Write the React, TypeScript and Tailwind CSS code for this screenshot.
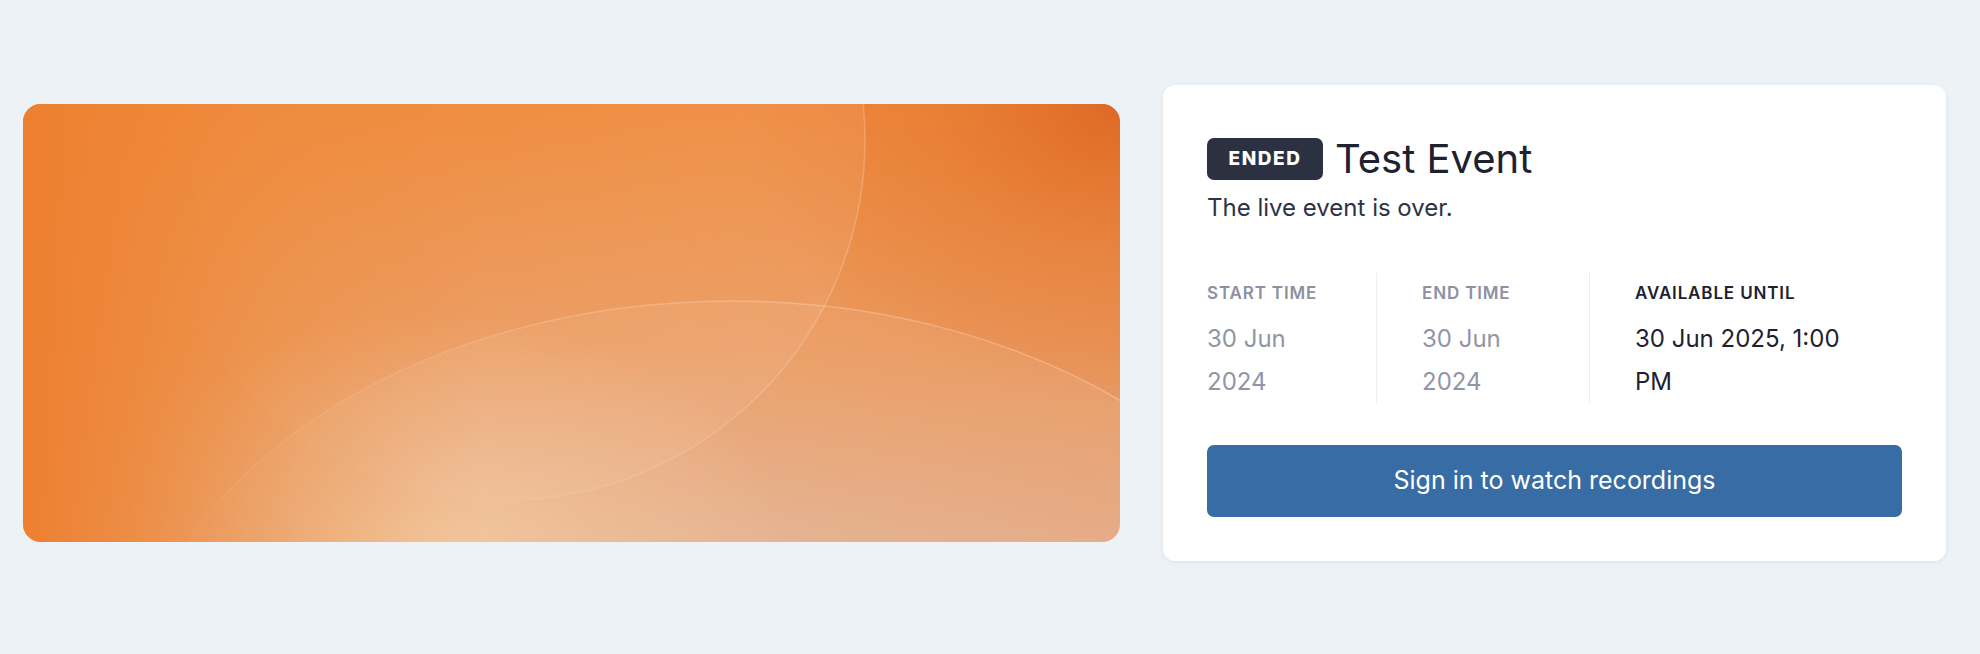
import React from "react";

function Banner() {
  return (
    <div className="relative h-[438px] flex-1 overflow-hidden rounded-[18px]">
      <svg
        className="absolute inset-0 h-full w-full"
        viewBox="0 0 1097 438"
        preserveAspectRatio="none"
      >
        <defs>
          <linearGradient id="base" x1="0" y1="0" x2="0" y2="1">
            <stop offset="0" stopColor="#ef8a3c" />
            <stop offset="0.55" stopColor="#eb9b60" />
            <stop offset="1" stopColor="#e4b190" />
          </linearGradient>
          <linearGradient id="leftFade" x1="0" y1="0" x2="1" y2="0">
            <stop offset="0" stopColor="#ed7f30" stopOpacity="1" />
            <stop offset="0.1" stopColor="#ee8434" stopOpacity="0.8" />
            <stop offset="0.25" stopColor="#ee8a3a" stopOpacity="0.35" />
            <stop offset="0.42" stopColor="#ee8a3a" stopOpacity="0" />
          </linearGradient>
          <radialGradient
            id="glow"
            gradientUnits="userSpaceOnUse"
            cx="0"
            cy="0"
            r="1"
            gradientTransform="translate(410 460) scale(360 250)"
          >
            <stop offset="0" stopColor="#f4c89c" stopOpacity="0.95" />
            <stop offset="0.5" stopColor="#f2c093" stopOpacity="0.45" />
            <stop offset="1" stopColor="#f2c093" stopOpacity="0" />
          </radialGradient>
          <radialGradient
            id="corner"
            gradientUnits="userSpaceOnUse"
            cx="0"
            cy="0"
            r="1"
            gradientTransform="translate(1097 0) scale(380 300)"
          >
            <stop offset="0" stopColor="#dc6324" stopOpacity="0.85" />
            <stop offset="0.5" stopColor="#e27028" stopOpacity="0.35" />
            <stop offset="1" stopColor="#e27028" stopOpacity="0" />
          </radialGradient>
          <linearGradient id="rightShade" x1="0" y1="0" x2="1" y2="0">
            <stop offset="0.6" stopColor="#e07a3a" stopOpacity="0" />
            <stop offset="1" stopColor="#e07a3a" stopOpacity="0.2" />
          </linearGradient>
          <linearGradient
            id="stroke1"
            gradientUnits="userSpaceOnUse"
            x1="122"
            y1="0"
            x2="842"
            y2="0"
          >
            <stop offset="0" stopColor="#ffffff" stopOpacity="0" />
            <stop offset="0.45" stopColor="#ffffff" stopOpacity="0.04" />
            <stop offset="0.8" stopColor="#ffffff" stopOpacity="0.14" />
            <stop offset="1" stopColor="#ffffff" stopOpacity="0.2" />
          </linearGradient>
          <linearGradient
            id="fill1"
            gradientUnits="userSpaceOnUse"
            x1="122"
            y1="0"
            x2="842"
            y2="0"
          >
            <stop offset="0" stopColor="#ffffff" stopOpacity="0" />
            <stop offset="0.5" stopColor="#ffffff" stopOpacity="0.03" />
            <stop offset="1" stopColor="#ffffff" stopOpacity="0.07" />
          </linearGradient>
          <linearGradient
            id="stroke2"
            gradientUnits="userSpaceOnUse"
            x1="103"
            y1="0"
            x2="1097"
            y2="0"
          >
            <stop offset="0" stopColor="#ffffff" stopOpacity="0" />
            <stop offset="0.2" stopColor="#ffffff" stopOpacity="0.1" />
            <stop offset="0.5" stopColor="#ffffff" stopOpacity="0.2" />
            <stop offset="1" stopColor="#ffffff" stopOpacity="0.26" />
          </linearGradient>
          <linearGradient
            id="fill2"
            gradientUnits="userSpaceOnUse"
            x1="103"
            y1="0"
            x2="1097"
            y2="0"
          >
            <stop offset="0" stopColor="#ffffff" stopOpacity="0" />
            <stop offset="0.3" stopColor="#ffffff" stopOpacity="0.05" />
            <stop offset="1" stopColor="#ffffff" stopOpacity="0.07" />
          </linearGradient>
        </defs>
        <rect x="0" y="0" width="1097" height="438" fill="url(#base)" />
        <rect x="0" y="0" width="1097" height="438" fill="url(#rightShade)" />
        <rect x="0" y="0" width="1097" height="438" fill="url(#glow)" />
        <rect x="0" y="0" width="1097" height="438" fill="url(#leftFade)" />
        <rect x="0" y="0" width="1097" height="438" fill="url(#corner)" />
        <circle
          cx="482"
          cy="36"
          r="360"
          fill="url(#fill1)"
          stroke="url(#stroke1)"
          strokeWidth="1.5"
        />
        <ellipse
          cx="709"
          cy="626"
          rx="606"
          ry="429"
          fill="url(#fill2)"
          stroke="url(#stroke2)"
          strokeWidth="1.5"
        />
      </svg>
    </div>
  );
}

function InfoColumn({
  label,
  value,
  dark,
  className,
}: {
  label: string;
  value: string;
  dark?: boolean;
  className: string;
}) {
  return (
    <div className={className}>
      <div
        className={
          dark
            ? "text-[17px] leading-[24px] font-semibold uppercase tracking-[0.05em] text-[#1e2230]"
            : "text-[17px] leading-[24px] font-semibold uppercase tracking-[0.05em] text-[#8c90a0]"
        }
      >
        {label}
      </div>
      <div
        className={
          dark
            ? "mt-[12px] text-[24px] leading-[43px] text-[#1e2230]"
            : "mt-[12px] text-[24px] leading-[43px] text-[#9195a5]"
        }
      >
        {value}
      </div>
    </div>
  );
}

export default function App() {
  return (
    <div className="min-h-screen bg-[#edf2f7] pl-[23px] pr-[34px] pt-[85px] font-['Inter',_'Noto_Sans',_sans-serif]">
      <div className="flex items-center gap-[43px]">
        <Banner />
        <div className="w-[783px] shrink-0 rounded-[12px] bg-white px-[44px] pt-[50px] pb-[44px] shadow-[0_1px_4px_rgba(30,40,60,0.08)]">
          <div className="flex items-center gap-[12px]">
            <span className="flex h-[42px] w-[116px] items-center justify-center rounded-[7px] bg-[#2b3141] text-[19px] font-extrabold tracking-[0.08em] text-white">
              ENDED
            </span>
            <h1 className="text-[40px] leading-[48px] font-normal text-[#1e2230]">
              Test Event
            </h1>
          </div>
          <p className="mt-[7px] text-[24px] leading-[36px] text-[#2d3344]">
            The live event is over.
          </p>
          <div className="mt-[47px] flex">
            <InfoColumn
              className="w-[169px] shrink-0 pt-[8px] pr-[45px]"
              label="Start time"
              value="30 Jun 2024"
            />
            <InfoColumn
              className="w-[213px] shrink-0 border-l border-[#eceef2] pt-[8px] pl-[45px] pr-[45px]"
              label="End time"
              value="30 Jun 2024"
            />
            <InfoColumn
              className="flex-1 border-l border-[#eceef2] pt-[8px] pl-[45px] pr-[45px]"
              label="Available until"
              value="30 Jun 2025, 1:00 PM"
              dark
            />
          </div>
          <button className="mt-[42px] flex h-[72px] w-full items-center justify-center rounded-[7px] bg-[#376ca5] text-[25px] font-normal text-white">
            Sign in to watch recordings
          </button>
        </div>
      </div>
    </div>
  );
}
